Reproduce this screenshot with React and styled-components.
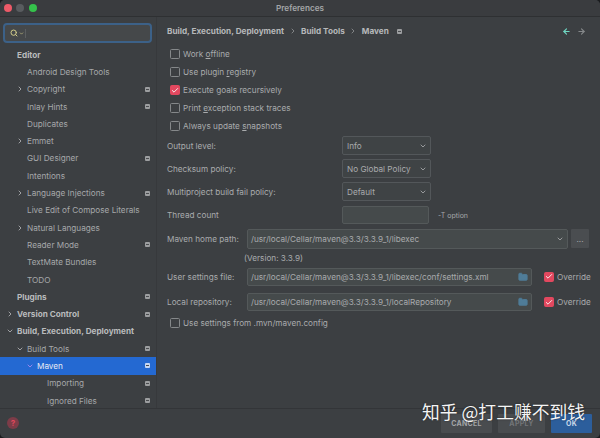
import React from 'react'
import styled, { createGlobalStyle } from 'styled-components'
import { ArrowLeft, ArrowRight, Check, ChevronDown, ChevronRight, Folder, Search } from 'lucide-react'

const Global = createGlobalStyle`
  html, body {
    margin: 0;
    padding: 0;
    background: #1b1c1e;
    overflow: hidden;
  }
  * { box-sizing: border-box; }
`

const Window = styled.div`
  position: relative;
  width: 600px;
  height: 438px;
  display: flex;
  flex-direction: column;
  overflow: hidden;
  border-radius: 5px;
  background: #3c3f42;
  color: #a9abad;
  font-family: Inter, "Liberation Sans", sans-serif;
  font-size: 8.2px;
`

const TitleBar = styled.div`
  position: relative;
  height: 17px;
  flex: none;
  display: flex;
  align-items: center;
  justify-content: center;
  background: #3a3c3f;
  border-bottom: 1px solid #2e3032;
  font-weight: 600;
  color: #a4a6a8;
`

const Lights = styled.div`
  position: absolute;
  left: 3.5px;
  top: 4px;
  display: flex;
  gap: 4.5px;
`

const Light = styled.span`
  width: 8px;
  height: 8px;
  border-radius: 50%;
  background: ${({ $color }) => $color};
`

const Body = styled.div`
  flex: 1;
  min-height: 0;
  display: flex;
`

const Sidebar = styled.div`
  width: 157px;
  flex: none;
  padding-top: 6px;
  border-right: 1px solid #37393c;
  overflow: hidden;
`

const SearchBox = styled.div`
  height: 20px;
  margin: 0 4px 3px 3px;
  padding-left: 5px;
  display: flex;
  align-items: center;
  gap: 1px;
  border: 2px solid #3c6188;
  border-radius: 4px;
  background: #45484a;
  color: #d2cc8a;
`

const Caret = styled.span`
  width: 1px;
  height: 9px;
  background: #5b5e60;
`

const TreeRow = styled.div`
  height: 17.3px;
  position: relative;
  display: flex;
  align-items: center;
  padding-left: ${({ $level }) => 17 + $level * 10}px;
  padding-right: 6px;
  background: ${({ $selected }) => ($selected ? '#2469d2' : 'transparent')};
  color: ${({ $selected, $bold }) => ($selected ? '#e6ebf3' : $bold ? '#b9bbbd' : '#a6a8aa')};
  font-weight: ${({ $bold }) => ($bold ? 700 : 400)};
  white-space: nowrap;
`

const Arrow = styled.span`
  position: absolute;
  left: ${({ $level }) => 6 + $level * 10}px;
  display: flex;
  color: ${({ $selected }) => ($selected ? '#b18cf0' : '#b4b6b8')};
`

const RowLabel = styled.span`
  flex: 1;
`

const Glyph = styled.span`
  position: relative;
  display: inline-block;
  width: 5px;
  height: 5px;
  border-radius: 1px;
  background: ${({ $selected }) => ($selected ? '#c5d6f2' : '#9c9ea0')};
  &::after {
    content: '';
    position: absolute;
    left: 1px;
    right: 1px;
    top: 2px;
    height: 1px;
    background: #4a4c4f;
  }
`

const Main = styled.div`
  flex: 1;
  min-width: 0;
  padding: 0 8px 0 10px;
  display: flex;
  flex-direction: column;
`

const Crumbs = styled.div`
  height: 28px;
  flex: none;
  display: flex;
  align-items: center;
  gap: 4.5px;
  font-weight: 700;
  color: #b6b8ba;
`

const CrumbSep = styled.span`
  display: flex;
  color: #8f9193;
`

const NavArrows = styled.div`
  margin-left: auto;
  margin-right: 6px;
  display: flex;
  gap: 6px;
`

const CrumbGlyph = styled(Glyph)`
  margin-left: 4px;
`

const CheckGroup = styled.div`
  height: 89px;
  flex: none;
`

const CheckRow = styled.label`
  height: ${({ $h }) => $h || 18}px;
  flex: none;
  display: flex;
  align-items: center;
  gap: 3px;
  padding-left: 3px;
  white-space: nowrap;
`

const Box = styled.span`
  width: 10px;
  height: 10px;
  flex: none;
  display: flex;
  align-items: center;
  justify-content: center;
  border-radius: 1.5px;
  border: 1px solid ${({ $on }) => ($on ? '#e2485f' : '#85888a')};
  background: ${({ $on }) => ($on ? '#e2485f' : 'transparent')};
  color: #f6e9ea;
`

const FormRow = styled.div`
  height: ${({ $h }) => $h || 23}px;
  flex: none;
  display: flex;
  align-items: center;
  margin-top: ${({ $top }) => $top || 0}px;
`

const FieldLabel = styled.span`
  width: ${({ $w }) => $w}px;
  flex: none;
  white-space: nowrap;
`

const SelectBox = styled.div`
  width: 89px;
  height: 19px;
  flex: none;
  padding: 0 3px 0 4px;
  display: flex;
  align-items: center;
  justify-content: space-between;
  border: 1px solid #53575a;
  border-radius: 2px;
  background: #3f4345;
`

const TextField = styled.div`
  width: ${({ $w }) => $w}px;
  height: ${({ $h }) => $h || 18}px;
  flex: none;
  padding: 0 3px 0 3px;
  display: flex;
  align-items: center;
  justify-content: space-between;
  border: 1px solid #54595a;
  border-radius: 2px;
  background: #454a4b;
  white-space: nowrap;
`

const Hint = styled.span`
  margin-left: 9px;
  font-size: 7px;
  color: #a5a7a9;
`

const MoreButton = styled.div`
  width: 18px;
  height: 19px;
  flex: none;
  margin-left: 3px;
  display: flex;
  align-items: center;
  justify-content: center;
  background: #4a4d50;
  border-radius: 1px;
`

const Version = styled.div`
  height: 15px;
  flex: none;
  padding-left: 77px;
  display: flex;
  align-items: center;
`

const Override = styled.div`
  margin-left: 12px;
  display: flex;
  align-items: center;
  gap: 3px;
  white-space: nowrap;
`

const Footer = styled.div`
  height: 30px;
  flex: none;
  padding: 5px 8px 6px 7px;
  display: flex;
  align-items: center;
  gap: 6px;
  border-top: 1px solid #333538;
`

const HelpDot = styled.div`
  width: 12px;
  height: 12px;
  margin-right: auto;
  display: flex;
  align-items: center;
  justify-content: center;
  border-radius: 50%;
  background: #7d3c48;
  color: #e0485c;
  font-size: 8px;
  font-weight: 700;
`

const Btn = styled.div`
  width: ${({ $w }) => $w}px;
  height: 19px;
  display: flex;
  align-items: center;
  justify-content: center;
  background: ${({ $primary }) => ($primary ? '#2c5e9c' : '#494c4f')};
  color: ${({ $primary, $dim }) => ($primary ? '#c9d7e8' : $dim ? '#737679' : '#a3a5a7')};
  font-size: 7px;
  font-weight: 700;
  letter-spacing: 0.3px;
  border-radius: 1px;
`

const Watermark = styled.div`
  position: absolute;
  left: 422px;
  top: 399px;
  font-family: "Noto Sans CJK SC", sans-serif;
  font-size: 17.8px;
  line-height: 25px;
  color: #f4f4f4;
  white-space: nowrap;
  text-shadow: 0 0 2px rgba(0, 0, 0, 0.5);
`

const tree = [
  { label: 'Editor', level: 0, bold: true },
  { label: 'Android Design Tools', level: 1 },
  { label: 'Copyright', level: 1, arrow: 'right', glyph: true },
  { label: 'Inlay Hints', level: 1, glyph: true },
  { label: 'Duplicates', level: 1 },
  { label: 'Emmet', level: 1, arrow: 'right' },
  { label: 'GUI Designer', level: 1, glyph: true },
  { label: 'Intentions', level: 1 },
  { label: 'Language Injections', level: 1, arrow: 'right', glyph: true },
  { label: 'Live Edit of Compose Literals', level: 1 },
  { label: 'Natural Languages', level: 1, arrow: 'right' },
  { label: 'Reader Mode', level: 1, glyph: true },
  { label: 'TextMate Bundles', level: 1 },
  { label: 'TODO', level: 1 },
  { label: 'Plugins', level: 0, bold: true, glyph: true },
  { label: 'Version Control', level: 0, bold: true, arrow: 'right', glyph: true },
  { label: 'Build, Execution, Deployment', level: 0, bold: true, arrow: 'down' },
  { label: 'Build Tools', level: 1, arrow: 'down', glyph: true },
  { label: 'Maven', level: 2, arrow: 'down', glyph: true, selected: true },
  { label: 'Importing', level: 3, glyph: true },
  { label: 'Ignored Files', level: 3, glyph: true },
]

const checks = [
  [<>Work <u>o</u>ffline</>, false],
  [<>Use plugin <u>r</u>egistry</>, false],
  [<>Execute goals recursively</>, true],
  [<>Print <u>e</u>xception stack traces</>, false],
  [<>Always update <u>s</u>napshots</>, false],
]

const selects = [
  ['Output level:', 'Info'],
  ['Checksum policy:', 'No Global Policy'],
  ['Multiproject build fail policy:', 'Default'],
]

function Tick({ on }) {
  return <Box $on={on}>{on && <Check size={9} strokeWidth={3} />}</Box>
}

function FolderIcon() {
  return <Folder size={10} color="#4f7c98" fill="#4f7c98" />
}

export default function App() {
  return (
    <Window>
      <Global />
      <TitleBar>
        <Lights>
          <Light $color="#ed5a68" />
          <Light $color="#595c5f" />
          <Light $color="#35c24b" />
        </Lights>
        Preferences
      </TitleBar>
      <Body>
        <Sidebar>
          <SearchBox>
            <Search size={8} strokeWidth={3} />
            <ChevronDown size={5} strokeWidth={3} />
            <Caret />
          </SearchBox>
          {tree.map(({ label, level, bold, arrow, glyph, selected }) => (
            <TreeRow key={label} $level={level} $bold={bold} $selected={selected}>
              {arrow && (
                <Arrow $level={level} $selected={selected}>
                  {arrow === 'right' ? (
                    <ChevronRight size={8} strokeWidth={2.5} />
                  ) : (
                    <ChevronDown size={8} strokeWidth={2.5} />
                  )}
                </Arrow>
              )}
              <RowLabel>{label}</RowLabel>
              {glyph && <Glyph $selected={selected} />}
            </TreeRow>
          ))}
        </Sidebar>
        <Main>
          <Crumbs>
            Build, Execution, Deployment
            <CrumbSep><ChevronRight size={8} strokeWidth={2.5} /></CrumbSep>
            Build Tools
            <CrumbSep><ChevronRight size={8} strokeWidth={2.5} /></CrumbSep>
            Maven
            <CrumbGlyph />
            <NavArrows>
              <ArrowLeft size={9} strokeWidth={3} color="#6fd6c2" />
              <ArrowRight size={9} strokeWidth={3} color="#85888a" />
            </NavArrows>
          </Crumbs>
          <CheckGroup>
            {checks.map(([label, on], i) => (
              <CheckRow key={i}>
                <Tick on={on} />
                <span>{label}</span>
              </CheckRow>
            ))}
          </CheckGroup>
          {selects.map(([label, value]) => (
            <FormRow key={label}>
              <FieldLabel $w={175}>{label}</FieldLabel>
              <SelectBox>
                {value}
                <ChevronDown size={8} strokeWidth={2.5} />
              </SelectBox>
            </FormRow>
          ))}
          <FormRow $h={24}>
            <FieldLabel $w={175}>Thread count</FieldLabel>
            <TextField $w={87} />
            <Hint>-T option</Hint>
          </FormRow>
          <FormRow $h={23}>
            <FieldLabel $w={80}>Maven home path:</FieldLabel>
            <TextField $w={321} $h={20}>
              /usr/local/Cellar/maven@3.3/3.3.9_1/libexec
              <ChevronDown size={8} strokeWidth={2.5} />
            </TextField>
            <MoreButton>...</MoreButton>
          </FormRow>
          <Version>(Version: 3.3.9)</Version>
          <FormRow $h={23}>
            <FieldLabel $w={80}>User settings file:</FieldLabel>
            <TextField $w={285}>
              /usr/local/Cellar/maven@3.3/3.3.9_1/libexec/conf/settings.xml
              <FolderIcon />
            </TextField>
            <Override><Tick on />Override</Override>
          </FormRow>
          <FormRow $h={22} $top={3}>
            <FieldLabel $w={80}>Local repository:</FieldLabel>
            <TextField $w={285}>
              /usr/local/Cellar/maven@3.3/3.3.9_1/localRepository
              <FolderIcon />
            </TextField>
            <Override><Tick on />Override</Override>
          </FormRow>
          <CheckRow $h={20}>
            <Tick />
            <span>Use settings from .mvn/maven.config</span>
          </CheckRow>
        </Main>
      </Body>
      <Footer>
        <HelpDot>?</HelpDot>
        <Btn $w={51}>CANCEL</Btn>
        <Btn $w={47} $dim>APPLY</Btn>
        <Btn $w={41} $primary>OK</Btn>
      </Footer>
      <Watermark>知乎 @打工赚不到钱</Watermark>
    </Window>
  )
}
